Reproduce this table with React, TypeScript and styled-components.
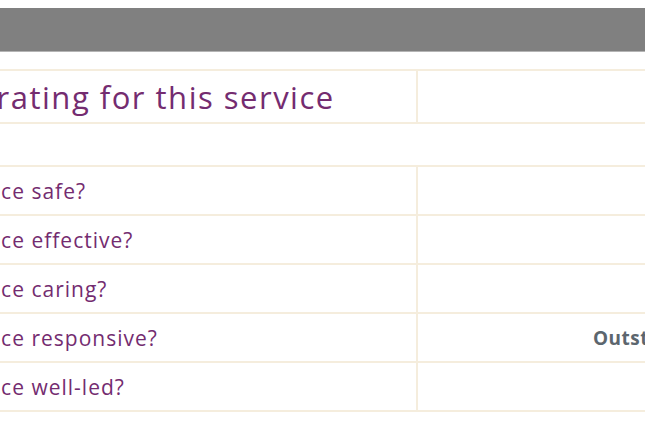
import React from "react";
import styled, { createGlobalStyle } from "styled-components";

const GlobalStyle = createGlobalStyle`
  html, body { margin: 0; padding: 0; background: #ffffff; }
  body { overflow: hidden; width: 645px; height: 445px; }
`;

const Page = styled.div`
  padding-top: 8px;
  width: 645px;
  overflow: hidden;
  font-family: "Open Sans", Lato, sans-serif;
`;

const Banner = styled.div`
  height: 43px;
  background: #808080;
  border-bottom: 1px solid #b4b4b4;
`;

const Table = styled.div<{ $shift: number }>`
  margin-top: 17px;
  margin-left: ${(p) => -p.$shift}px;
  width: ${(p) => 645 + p.$shift + 200}px;
  display: flex;
  flex-direction: column;
  border-bottom: 2px solid #f5eddd;
`;

const Row = styled.div<{ $h: number }>`
  display: flex;
  align-items: stretch;
  height: ${(p) => p.$h}px;
  border-top: 2px solid #f5eddd;
`;

const QuestionCell = styled.div<{ $w: number; $size: number; $ls: number }>`
  width: ${(p) => p.$w}px;
  flex: none;
  display: flex;
  align-items: center;
  color: #742c70;
  font-size: ${(p) => p.$size}px;
  letter-spacing: ${(p) => p.$ls}px;
  white-space: nowrap;
  overflow: hidden;
`;

const RatingCell = styled.div`
  flex: 1;
  border-left: 2px solid #f5eddd;
  display: flex;
  align-items: center;
  padding-left: 175px;
  color: #5c666e;
  font-weight: 700;
  font-size: 19px;
  letter-spacing: 0.5px;
  white-space: nowrap;
`;

const Pad = styled.span<{ $indent: number }>`
  padding-left: ${(p) => p.$indent}px;
`;

const SHIFT = 140;
const LEFT_W = SHIFT + 416;

const questions: string[] = [
  "Is the service safe?",
  "Is the service effective?",
  "Is the service caring?",
  "Is the service responsive?",
  "Is the service well-led?",
];

export default function App() {
  return (
    <>
      <GlobalStyle />
      <Page>
        <Banner />
        <Table $shift={SHIFT}>
          <Row $h={51}>
            <QuestionCell $w={LEFT_W} $size={31} $ls={1.5}>
              <Pad $indent={14}>Overall rating for this service</Pad>
            </QuestionCell>
            <RatingCell />
          </Row>
          <Row $h={41} />
          {questions.map((q) => (
            <Row $h={47} key={q}>
              <QuestionCell $w={LEFT_W} $size={21} $ls={1}>
                <Pad $indent={24}>{q}</Pad>
              </QuestionCell>
              <RatingCell>{q.includes("responsive") ? "Outstanding" : ""}</RatingCell>
            </Row>
          ))}
        </Table>
      </Page>
    </>
  );
}
